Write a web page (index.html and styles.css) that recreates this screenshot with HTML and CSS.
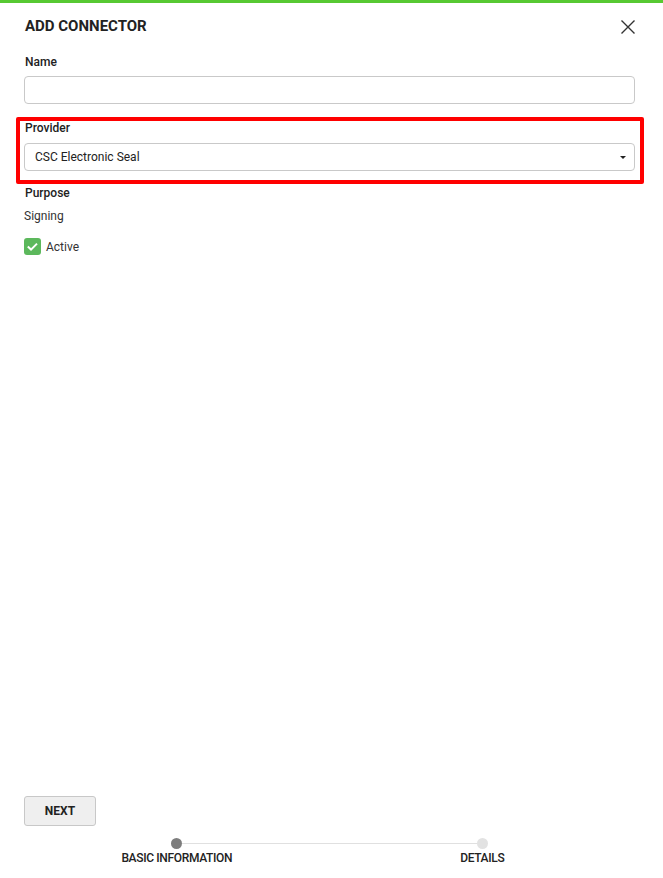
FILE: index.html
```html
<!DOCTYPE html>
<html>
<head>
<meta charset="utf-8"/>
<title>Add connector</title>
<link rel="stylesheet" href="styles.css">
</head>
<body>
<div class="topbar"></div>
<div class="dialog">
  <div class="content">
    <div class="header">
      <h1 class="title">ADD CONNECTOR</h1>
      <svg class="close" width="14" height="14" viewBox="0 0 14 14">
        <path d="M0.5 0.5 L13.5 13.5 M13.5 0.5 L0.5 13.5" stroke="#333" stroke-width="1.4" fill="none"/>
      </svg>
    </div>

    <div class="field field-first">
      <div class="label">Name</div>
      <div class="input"></div>
    </div>

    <div class="highlight">
      <div class="label">Provider</div>
      <div class="input select">
        <span>CSC Electronic Seal</span>
        <span class="caret"></span>
      </div>
    </div>

    <div class="label purpose">Purpose</div>
    <div class="value">Signing</div>

    <div class="check-row">
      <span class="checkbox">
        <svg width="17" height="17" viewBox="0 0 17 17">
          <path d="M3.8 8.6 L7 11.6 L13 5.6" stroke="#fff" stroke-width="2" fill="none"/>
        </svg>
      </span>
      <span class="check-label">Active</span>
    </div>
  </div>

  <div class="footer">
    <button class="btn">NEXT</button>
    <div class="stepper">
      <div class="track">
        <span></span>
        <span class="dot dot-done"></span>
        <span class="line"></span>
        <span class="dot"></span>
        <span></span>
      </div>
      <div class="step-labels">
        <span>BASIC INFORMATION</span>
        <span>DETAILS</span>
      </div>
    </div>
  </div>
</div>
</body>
</html>
```

FILE: styles.css
```css
html, body {
  margin: 0;
  padding: 0;
  background: #fff;
}

body {
  font-family: Roboto, "Liberation Sans", sans-serif;
  font-size: 12px;
  color: #222;
}

.topbar {
  height: 3px;
  background-color: #57c932;
}

.dialog {
  display: flex;
  flex-direction: column;
  height: 875px;
  padding: 0 28px 0 24px;
  box-sizing: border-box;
}

.content {
  flex: 1;
}

.header {
  display: flex;
  justify-content: space-between;
  align-items: center;
  margin-top: 14px;
  height: 18px;
}

.title {
  margin: 0 0 0 1px;
  font-size: 15px;
  line-height: 16px;
  font-weight: 700;
  color: #222;
}

.close {
  margin-top: 2px;
}

.field-first {
  margin-top: 20px;
}

.label {
  font-size: 12px;
  line-height: 14px;
  font-weight: 500;
  color: #222;
  margin-left: 1px;
}

.input {
  margin-top: 7px;
  height: 28px;
  border: 1px solid #c9c9c9;
  border-radius: 4px;
  box-sizing: border-box;
}

/* red callout round the provider field */
.highlight {
  margin: 13px -9px 0 -8px;
  padding: 0 5px 9px 4px;
  border: 4px solid #ff0000;
  border-radius: 2px;
}

.highlight .input {
  margin-top: 8px;
}

.select {
  display: flex;
  align-items: center;
  justify-content: space-between;
  padding: 0 8px 0 10px;
  color: #222;
}

.caret {
  width: 0;
  height: 0;
  border-left: 3px solid transparent;
  border-right: 3px solid transparent;
  border-top: 3px solid #222;
  margin-top: 1px;
}

.purpose {
  margin-top: 2px;
}

.value {
  margin-top: 9px;
  line-height: 14px;
  color: #333;
}

.check-row {
  display: flex;
  align-items: center;
  margin-top: 15px;
}

.checkbox {
  display: inline-flex;
  width: 17px;
  height: 17px;
  border-radius: 3px;
  background-color: #5cb85c;
  align-items: center;
  justify-content: center;
}

.check-label {
  margin-left: 5px;
  color: #333;
}

.footer {
  padding-bottom: 13px;
}

.btn {
  display: block;
  width: 72px;
  height: 30px;
  font-family: Roboto, "Liberation Sans", sans-serif;
  font-size: 12px;
  font-weight: 700;
  color: #222;
  background-color: #efefef;
  border: 1px solid #c8c8c8;
  border-radius: 3px;
  padding: 0;
}

.stepper {
  margin-top: 12px;
}

.track {
  display: grid;
  grid-template-columns: 1fr 11px 2fr 11px 1fr;
  align-items: center;
  height: 11px;
}

.dot {
  width: 11px;
  height: 11px;
  border-radius: 50%;
  background-color: #e2e2e2;
}

.dot-done {
  background-color: #7d7d7d;
}

.line {
  height: 1px;
  background-color: #e0e0e0;
}

.step-labels {
  display: grid;
  grid-template-columns: 1fr 1fr;
  text-align: center;
  margin-top: 2px;
  font-size: 12px;
  line-height: 14px;
  font-weight: 500;
  letter-spacing: -0.35px;
  color: #222;
}
```
